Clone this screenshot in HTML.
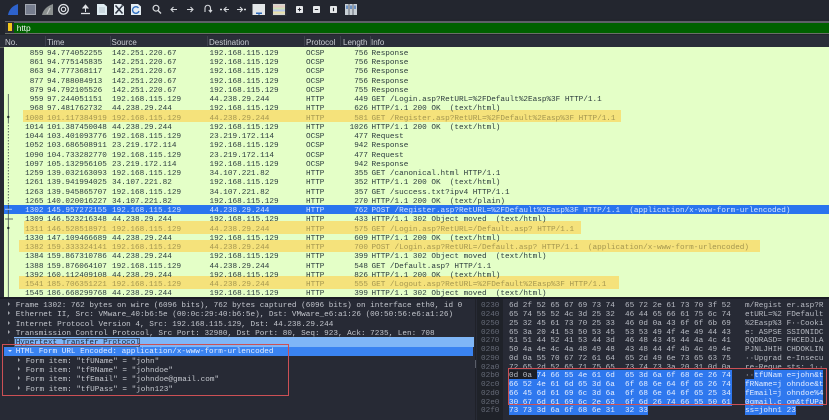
<!DOCTYPE html>
<html><head><meta charset="utf-8"><style>
html,body{margin:0;padding:0;background:#272a35;}
#w{position:relative;width:829px;height:420px;overflow:hidden;background:#272a35;filter:blur(.35px);font-family:"Liberation Mono",monospace;font-size:7.68px;}
.a{position:absolute;}
.r{position:absolute;left:0;width:829px;height:9.25px;line-height:9.25px;color:#2c3c3e;white-space:pre;}
.r i{position:absolute;font-style:normal;top:2.5px;}
.n{right:785.5px;}.t{left:47px;}.s{left:112px;}.d{left:209.5px;}.p{left:306px;}.l{right:461px;}.f{left:371.5px;}
.r.y{color:#a59750;}
.r.sel{color:#d5e4ff;}
.h{position:absolute;top:36px;height:12px;font:8px/14px "Liberation Sans",sans-serif;color:#c9ccd2;}
.sep{position:absolute;top:36px;width:1px;height:10px;background:#3d414c;}
.dt{position:absolute;height:9.25px;line-height:9.25px;white-space:pre;color:#c3c6cd;margin-top:2.5px;}
.ar{position:absolute;width:0;height:0;border-left:2.5px solid #a5a8b0;border-top:2px solid transparent;border-bottom:2px solid transparent;}
.hx{position:absolute;height:8.75px;line-height:8.75px;white-space:pre;color:#b9bcc4;margin-top:2.3px;}
.of{color:#666b78;}
.bl{position:absolute;background:#2f78ee;height:9px;}
.w{color:#e3edff;}
</style></head><body><div id="w">

<!-- toolbar -->
<div class="a" style="left:0;top:0;width:829px;height:19px;background:#23262f"></div>
<svg class="a" style="left:0;top:0" width="370" height="19" viewBox="0 0 370 19">
<path d="M8 15C8.800 10 12 6 18 4L18 15Z" fill="#2d62cc"/>
<rect x="25.500" y="4.500" width="10" height="10" fill="#767d8e" stroke="#a3a8b2"/>
<path d="M42 15C43 10 47 6 53 4L53 15Z" fill="#8b908f"/><path d="M47 14L50 8" stroke="#c4c7c7" stroke-width="1.200"/>
<circle cx="63.500" cy="9.300" r="4.800" fill="none" stroke="#dfe2e6" stroke-width="1.300"/><circle cx="63.500" cy="9.300" r="2.200" fill="none" stroke="#dfe2e6" stroke-width="1.200"/>
<path d="M85.500 12V6M83 8L85.500 5L88 8Z" stroke="#dfe2e6" fill="#dfe2e6"/><path d="M81 13.500H90" stroke="#dfe2e6" stroke-width="1.300"/>
<path d="M97 4H104L107 6.500V15H97Z" fill="#dfecf2"/><path d="M99 8H105M99 10H105M99 12H105" stroke="#a6b6c0" stroke-width=".700"/>
<path d="M114 4H121L124 6.500V15H114Z" fill="#e5edf2"/><path d="M115.500 5.500L122.500 13.500M122.500 5.500L115.500 13.500" stroke="#2c3340" stroke-width="1.500"/>
<path d="M131 4H138L141 6.500V15H131Z" fill="#e5edf2"/><path d="M138.500 8A3.300 3.300 0 1 0 139 11" fill="none" stroke="#3070c0" stroke-width="1.400"/>
<circle cx="156" cy="8.200" r="2.900" fill="none" stroke="#d7dade" stroke-width="1.200"/><path d="M158 10.500L161 13.500" stroke="#d7dade" stroke-width="1.400"/>
<path d="M177 9.500H171M173.500 7L171 9.500L173.500 12" fill="none" stroke="#d7dade" stroke-width="1.100"/>
<path d="M187 9.500H193M190.500 7L193 9.500L190.500 12" fill="none" stroke="#d7dade" stroke-width="1.100"/>
<path d="M205 12V8A2.700 2.700 0 0 1 210.500 8V11.500M208.800 10L210.500 12L212 10" fill="none" stroke="#d7dade" stroke-width="1.100"/>
<path d="M229 9.500H224.500M226.500 7L224 9.500L226.500 12" fill="none" stroke="#d7dade" stroke-width="1.100"/><path d="M220 9.500H222" stroke="#d7dade" stroke-width="1.500"/>
<path d="M237 9.500H242M240 7L242.500 9.500L240 12" fill="none" stroke="#d7dade" stroke-width="1.100"/><path d="M244 9.500H246" stroke="#d7dade" stroke-width="1.500"/>
<rect x="252.500" y="4" width="12.500" height="11" fill="#e3e6e8"/><path d="M256 12.500H262L259 15Z" fill="#2d68b8"/><rect x="256" y="12.500" width="6" height="1.500" fill="#2d68b8"/>
<rect x="271.500" y="3" width="15" height="13" fill="#2e313b"/><rect x="273" y="4" width="12" height="11" fill="#d8d8d0"/><rect x="273" y="5.500" width="12" height="2" fill="#e5c9c0"/><rect x="273" y="7.500" width="12" height="2" fill="#cfe0b8"/><rect x="273" y="9.500" width="12" height="2" fill="#b8c8e8"/><rect x="273" y="11.500" width="12" height="2" fill="#e8e0a8"/>
<rect x="296" y="6" width="7" height="7" rx=".8" fill="#e6e8ea"/><path d="M297.800 9.500H301.200M299.500 7.800V11.200" stroke="#22252e" stroke-width="1"/>
<rect x="313" y="6" width="7" height="7" rx=".8" fill="#e6e8ea"/><path d="M314.800 9.500H318.200" stroke="#22252e" stroke-width="1"/>
<rect x="330" y="6" width="7" height="7" rx=".8" fill="#e6e8ea"/><path d="M333.500 7.800V11.200" stroke="#22252e" stroke-width="1.100"/>
<rect x="345" y="4" width="12" height="11" fill="#c9d0d6"/><path d="M349 4V15M353 4V15" stroke="#4a4f5a" stroke-width=".8"/><path d="M347 5.500V9M351 5.500V9M355 5.500V9" stroke="#2d68b8" stroke-width="1.200"/>
</svg>

<!-- filter -->
<div class="a" style="left:0;top:19px;width:829px;height:16px;background:#22252d"></div>
<div class="a" style="left:5px;top:21px;width:824px;height:1.600px;background:#5e6068"></div>
<div class="a" style="left:5px;top:22.600px;width:824px;height:10px;background:#006100"></div>
<div class="a" style="left:5px;top:32.600px;width:824px;height:1.200px;background:#6a7068"></div>
<div class="a" style="left:5px;top:22px;width:9px;height:11px;background:#2a2c33"></div>
<div class="a" style="left:8px;top:23px;width:4px;height:8px;background:#f3c81c"></div>
<div class="a" style="left:16.700px;top:23.200px;font:8.400px/10px 'Liberation Sans',sans-serif;color:#f2f6f2">http</div>

<!-- header -->
<div class="a" style="left:0;top:35px;width:829px;height:12px;background:#2a2e38"></div>
<div class="h" style="left:5px">No.</div><div class="h" style="left:47px">Time</div><div class="h" style="left:111.500px">Source</div><div class="h" style="left:209px">Destination</div><div class="h" style="left:306px">Protocol</div><div class="h" style="left:343px">Length</div><div class="h" style="left:371px">Info</div>
<div class="sep" style="left:44.500px"></div><div class="sep" style="left:110px"></div><div class="sep" style="left:206.500px"></div><div class="sep" style="left:303.500px"></div><div class="sep" style="left:340px"></div><div class="sep" style="left:369.500px"></div>
<div class="a" style="left:0;top:46.600px;width:829px;height:.800px;background:#61665f"></div>

<!-- list -->
<div class="a" style="left:3.500px;top:47.400px;width:826px;height:249.400px;background:#e4ffc7"></div>
<div class="a" style="left:23px;top:109.500px;width:598px;height:12.700px;background:#f5e27b"></div>
<div class="a" style="left:24px;top:221px;width:557px;height:12.700px;background:#f5e27b"></div>
<div class="a" style="left:19px;top:239.500px;width:741px;height:12.700px;background:#f5e27b"></div>
<div class="a" style="left:19px;top:275.800px;width:600px;height:12.900px;background:#f5e27b"></div>
<div class="a" style="left:3.500px;top:205px;width:826px;height:9.200px;background:#2a74ee"></div>

<div class="r" style="top:47.400px"><i class="n">859</i><i class="t">94.774052255</i><i class="s">142.251.220.67</i><i class="d">192.168.115.129</i><i class="p">OCSP</i><i class="l">756</i><i class="f">Response</i></div>
<div class="r" style="top:56.650px"><i class="n">861</i><i class="t">94.775145835</i><i class="s">142.251.220.67</i><i class="d">192.168.115.129</i><i class="p">OCSP</i><i class="l">756</i><i class="f">Response</i></div>
<div class="r" style="top:65.900px"><i class="n">863</i><i class="t">94.777368117</i><i class="s">142.251.220.67</i><i class="d">192.168.115.129</i><i class="p">OCSP</i><i class="l">756</i><i class="f">Response</i></div>
<div class="r" style="top:75.150px"><i class="n">877</i><i class="t">94.788084913</i><i class="s">142.251.220.67</i><i class="d">192.168.115.129</i><i class="p">OCSP</i><i class="l">756</i><i class="f">Response</i></div>
<div class="r" style="top:84.400px"><i class="n">879</i><i class="t">94.792105526</i><i class="s">142.251.220.67</i><i class="d">192.168.115.129</i><i class="p">OCSP</i><i class="l">755</i><i class="f">Response</i></div>
<div class="r" style="top:93.650px"><i class="n">959</i><i class="t">97.244051151</i><i class="s">192.168.115.129</i><i class="d">44.238.29.244</i><i class="p">HTTP</i><i class="l">449</i><i class="f">GET /Login.asp?RetURL=%2FDefault%2Easp%3F HTTP/1.1</i></div>
<div class="r" style="top:102.900px"><i class="n">968</i><i class="t">97.481762732</i><i class="s">44.238.29.244</i><i class="d">192.168.115.129</i><i class="p">HTTP</i><i class="l">626</i><i class="f">HTTP/1.1 200 OK  (text/html)</i></div>
<div class="r y" style="top:112.150px"><i class="n">1008</i><i class="t">101.117384919</i><i class="s">192.168.115.129</i><i class="d">44.238.29.244</i><i class="p">HTTP</i><i class="l">581</i><i class="f">GET /Register.asp?RetURL=%2FDefault%2Easp%3F HTTP/1.1</i></div>
<div class="r" style="top:121.400px"><i class="n">1014</i><i class="t">101.387450048</i><i class="s">44.238.29.244</i><i class="d">192.168.115.129</i><i class="p">HTTP</i><i class="l">1026</i><i class="f">HTTP/1.1 200 OK  (text/html)</i></div>
<div class="r" style="top:130.650px"><i class="n">1044</i><i class="t">103.401093776</i><i class="s">192.168.115.129</i><i class="d">23.219.172.114</i><i class="p">OCSP</i><i class="l">477</i><i class="f">Request</i></div>
<div class="r" style="top:139.900px"><i class="n">1052</i><i class="t">103.686508911</i><i class="s">23.219.172.114</i><i class="d">192.168.115.129</i><i class="p">OCSP</i><i class="l">942</i><i class="f">Response</i></div>
<div class="r" style="top:149.150px"><i class="n">1090</i><i class="t">104.733282770</i><i class="s">192.168.115.129</i><i class="d">23.219.172.114</i><i class="p">OCSP</i><i class="l">477</i><i class="f">Request</i></div>
<div class="r" style="top:158.400px"><i class="n">1097</i><i class="t">105.132956105</i><i class="s">23.219.172.114</i><i class="d">192.168.115.129</i><i class="p">OCSP</i><i class="l">942</i><i class="f">Response</i></div>
<div class="r" style="top:167.650px"><i class="n">1259</i><i class="t">139.032163093</i><i class="s">192.168.115.129</i><i class="d">34.107.221.82</i><i class="p">HTTP</i><i class="l">355</i><i class="f">GET /canonical.html HTTP/1.1</i></div>
<div class="r" style="top:176.900px"><i class="n">1261</i><i class="t">139.941994025</i><i class="s">34.107.221.82</i><i class="d">192.168.115.129</i><i class="p">HTTP</i><i class="l">352</i><i class="f">HTTP/1.1 200 OK  (text/html)</i></div>
<div class="r" style="top:186.150px"><i class="n">1263</i><i class="t">139.945865707</i><i class="s">192.168.115.129</i><i class="d">34.107.221.82</i><i class="p">HTTP</i><i class="l">357</i><i class="f">GET /success.txt?ipv4 HTTP/1.1</i></div>
<div class="r" style="top:195.400px"><i class="n">1265</i><i class="t">140.020016227</i><i class="s">34.107.221.82</i><i class="d">192.168.115.129</i><i class="p">HTTP</i><i class="l">270</i><i class="f">HTTP/1.1 200 OK  (text/plain)</i></div>
<div class="r sel" style="top:204.650px"><i class="n">1302</i><i class="t">145.957272155</i><i class="s">192.168.115.129</i><i class="d">44.238.29.244</i><i class="p">HTTP</i><i class="l">762</i><i class="f">POST /Register.asp?RetURL=%2FDefault%2Easp%3F HTTP/1.1  (application/x-www-form-urlencoded)</i></div>
<div class="r" style="top:213.900px"><i class="n">1309</i><i class="t">146.523216348</i><i class="s">44.238.29.244</i><i class="d">192.168.115.129</i><i class="p">HTTP</i><i class="l">433</i><i class="f">HTTP/1.1 302 Object moved  (text/html)</i></div>
<div class="r y" style="top:223.150px"><i class="n">1311</i><i class="t">146.528518971</i><i class="s">192.168.115.129</i><i class="d">44.238.29.244</i><i class="p">HTTP</i><i class="l">575</i><i class="f">GET /Login.asp?RetURL=/Default.asp? HTTP/1.1</i></div>
<div class="r" style="top:232.400px"><i class="n">1330</i><i class="t">147.109466689</i><i class="s">44.238.29.244</i><i class="d">192.168.115.129</i><i class="p">HTTP</i><i class="l">609</i><i class="f">HTTP/1.1 200 OK  (text/html)</i></div>
<div class="r y" style="top:241.650px"><i class="n">1382</i><i class="t">159.333324141</i><i class="s">192.168.115.129</i><i class="d">44.238.29.244</i><i class="p">HTTP</i><i class="l">700</i><i class="f">POST /Login.asp?RetURL=/Default.asp? HTTP/1.1  (application/x-www-form-urlencoded)</i></div>
<div class="r" style="top:250.900px"><i class="n">1384</i><i class="t">159.867310786</i><i class="s">44.238.29.244</i><i class="d">192.168.115.129</i><i class="p">HTTP</i><i class="l">399</i><i class="f">HTTP/1.1 302 Object moved  (text/html)</i></div>
<div class="r" style="top:260.150px"><i class="n">1388</i><i class="t">159.876064107</i><i class="s">192.168.115.129</i><i class="d">44.238.29.244</i><i class="p">HTTP</i><i class="l">548</i><i class="f">GET /Default.asp? HTTP/1.1</i></div>
<div class="r" style="top:269.400px"><i class="n">1392</i><i class="t">160.112409108</i><i class="s">44.238.29.244</i><i class="d">192.168.115.129</i><i class="p">HTTP</i><i class="l">826</i><i class="f">HTTP/1.1 200 OK  (text/html)</i></div>
<div class="r y" style="top:278.650px"><i class="n">1541</i><i class="t">185.706351221</i><i class="s">192.168.115.129</i><i class="d">44.238.29.244</i><i class="p">HTTP</i><i class="l">555</i><i class="f">GET /Logout.asp?RetURL=%2FDefault%2Easp%3F HTTP/1.1</i></div>
<div class="r" style="top:287.900px;height:8.900px;overflow:hidden"><i class="n">1545</i><i class="t">186.668299768</i><i class="s">44.238.29.244</i><i class="d">192.168.115.129</i><i class="p">HTTP</i><i class="l">399</i><i class="f">HTTP/1.1 302 Object moved  (text/html)</i></div>

<!-- related packet gutter -->
<svg class="a" style="left:0;top:90px" width="20" height="210" viewBox="0 0 20 210">
<path d="M8.300 4V32" stroke="#3c4a4c" stroke-width=".8"/>
<path d="M8.300 32V115" stroke="#3c4a4c" stroke-width=".8" stroke-dasharray="1.500 1.500"/>
<path d="M8.300 115V207" stroke="#3c4a4c" stroke-width=".8"/>
<circle cx="8.300" cy="27" r="1.200" fill="#1e2a2c"/>
<path d="M5 119.300H12" stroke="#aac4f0" stroke-width="1"/>
<path d="M5 129H13" stroke="#3c4a4c" stroke-width=".8"/>
<circle cx="8.300" cy="138" r="1.200" fill="#1e2a2c"/>
</svg>

<!-- separator -->
<div class="a" style="left:0;top:296.800px;width:829px;height:2.500px;background:#1b1d25"></div>

<!-- details -->
<div class="a" style="left:13.500px;top:337.300px;width:460px;height:9.400px;background:#7fb6f7"></div>
<div class="a" style="left:14px;top:337.500px;width:126px;height:9px;border:.6px solid #4a5a74;box-sizing:border-box"></div>
<div class="a" style="left:4px;top:346.700px;width:469px;height:9.200px;background:#3a83f1"></div>
<div class="ar" style="left:8px;top:302px"></div>
<div class="ar" style="left:8px;top:311.300px"></div>
<div class="ar" style="left:8px;top:320.600px"></div>
<div class="ar" style="left:8px;top:329.900px"></div>
<div class="ar" style="left:8px;top:339.200px;border-left-color:#30384a"></div>
<div class="a" style="left:7.500px;top:349.800px;width:0;height:0;border-top:2.500px solid #dce8ff;border-left:2px solid transparent;border-right:2px solid transparent"></div>
<div class="ar" style="left:18px;top:357.700px"></div>
<div class="ar" style="left:18px;top:367px"></div>
<div class="ar" style="left:18px;top:376.300px"></div>
<div class="ar" style="left:18px;top:385.600px"></div>
<div class="dt" style="left:15.700px;top:299.400px">Frame 1302: 762 bytes on wire (6096 bits), 762 bytes captured (6096 bits) on interface eth0, id 0</div>
<div class="dt" style="left:15.700px;top:308.700px">Ethernet II, Src: VMware_40:b6:5e (00:0c:29:40:b6:5e), Dst: VMware_e6:a1:26 (00:50:56:e6:a1:26)</div>
<div class="dt" style="left:15.700px;top:318px">Internet Protocol Version 4, Src: 192.168.115.129, Dst: 44.238.29.244</div>
<div class="dt" style="left:15.700px;top:327.300px">Transmission Control Protocol, Src Port: 32980, Dst Port: 80, Seq: 923, Ack: 7235, Len: 708</div>
<div class="dt" style="left:15.700px;top:336.600px;color:#222c3c">Hypertext Transfer Protocol</div>
<div class="dt" style="left:15.700px;top:345.900px;color:#e4eeff">HTML Form URL Encoded: application/x-www-form-urlencoded</div>
<div class="dt" style="left:25.700px;top:355.200px">Form item: "tfUName" = "john"</div>
<div class="dt" style="left:25.700px;top:364.500px">Form item: "tfRName" = "johndoe"</div>
<div class="dt" style="left:25.700px;top:373.800px">Form item: "tfEmail" = "johndoe@gmail.com"</div>
<div class="dt" style="left:25.700px;top:383.100px">Form item: "tfUPass" = "john123"</div>
<div class="a" style="left:2.200px;top:344.300px;width:286.500px;height:51.400px;border:1.300px solid #cc5055;box-sizing:border-box"></div>
<div class="a" style="left:475px;top:299px;width:1.200px;height:121px;background:#1f2129"></div>
<div class="a" style="left:474.500px;top:360px;width:1.500px;height:8px;background:#5a5e68"></div>

<!-- bytes -->
<div class="a" style="left:477px;top:299px;width:26px;height:121px;background:#1f2229"></div>
<div class="bl" style="left:537px;top:370px;width:195px"></div>
<div class="bl" style="left:509px;top:379px;width:223px;height:26.500px"></div>
<div class="bl" style="left:509px;top:405.500px;width:139px"></div>
<div class="bl" style="left:754px;top:370px;width:69px"></div>
<div class="bl" style="left:745px;top:379px;width:78px;height:26.500px"></div>
<div class="bl" style="left:745px;top:405.500px;width:51px"></div>
<div class="a" style="left:509px;top:370px;width:28px;height:9px;background:#1c1e26"></div>

<div class="hx of" style="left:481px;top:300px">0230</div><div class="hx" style="left:509px;top:300px">6d 2f 52 65 67 69 73 74</div><div class="hx" style="left:625px;top:300px">65 72 2e 61 73 70 3f 52</div><div class="hx" style="left:745px;top:300px">m/Regist</div><div class="hx" style="left:786.600px;top:300px">er.asp?R</div>
<div class="hx of" style="left:481px;top:308.750px">0240</div><div class="hx" style="left:509px;top:308.750px">65 74 55 52 4c 3d 25 32</div><div class="hx" style="left:625px;top:308.750px">46 44 65 66 61 75 6c 74</div><div class="hx" style="left:745px;top:308.750px">etURL=%2</div><div class="hx" style="left:786.600px;top:308.750px">FDefault</div>
<div class="hx of" style="left:481px;top:317.500px">0250</div><div class="hx" style="left:509px;top:317.500px">25 32 45 61 73 70 25 33</div><div class="hx" style="left:625px;top:317.500px">46 0d 0a 43 6f 6f 6b 69</div><div class="hx" style="left:745px;top:317.500px">%2Easp%3</div><div class="hx" style="left:786.600px;top:317.500px">F··Cooki</div>
<div class="hx of" style="left:481px;top:326.250px">0260</div><div class="hx" style="left:509px;top:326.250px">65 3a 20 41 53 50 53 45</div><div class="hx" style="left:625px;top:326.250px">53 53 49 4f 4e 49 44 43</div><div class="hx" style="left:745px;top:326.250px">e: ASPSE</div><div class="hx" style="left:786.600px;top:326.250px">SSIONIDC</div>
<div class="hx of" style="left:481px;top:335px">0270</div><div class="hx" style="left:509px;top:335px">51 51 44 52 41 53 44 3d</div><div class="hx" style="left:625px;top:335px">46 48 43 45 44 4a 4c 41</div><div class="hx" style="left:745px;top:335px">QQDRASD=</div><div class="hx" style="left:786.600px;top:335px">FHCEDJLA</div>
<div class="hx of" style="left:481px;top:343.750px">0280</div><div class="hx" style="left:509px;top:343.750px">50 4a 4e 4c 4a 48 49 48</div><div class="hx" style="left:625px;top:343.750px">43 48 44 4f 4b 4c 49 4e</div><div class="hx" style="left:745px;top:343.750px">PJNLJHIH</div><div class="hx" style="left:786.600px;top:343.750px">CHDOKLIN</div>
<div class="hx of" style="left:481px;top:352.500px">0290</div><div class="hx" style="left:509px;top:352.500px">0d 0a 55 70 67 72 61 64</div><div class="hx" style="left:625px;top:352.500px">65 2d 49 6e 73 65 63 75</div><div class="hx" style="left:745px;top:352.500px">··Upgrad</div><div class="hx" style="left:786.600px;top:352.500px">e-Insecu</div>
<div class="hx of" style="left:481px;top:361.250px">02a0</div><div class="hx" style="left:509px;top:361.250px">72 65 2d 52 65 71 75 65</div><div class="hx" style="left:625px;top:361.250px">73 74 73 3a 20 31 0d 0a</div><div class="hx" style="left:745px;top:361.250px">re-Reque</div><div class="hx" style="left:786.600px;top:361.250px">sts: 1··</div>
<div class="hx of" style="left:481px;top:370px">02b0</div><div class="hx" style="left:509px;top:370px">0d 0a <span class="w">74 66 55 4e 61 6d</span></div><div class="hx w" style="left:625px;top:370px">65 3d 6a 6f 68 6e 26 74</div><div class="hx" style="left:745px;top:370px">··<span class="w">tfUNam</span></div><div class="hx w" style="left:786.600px;top:370px">e=john&amp;t</div>
<div class="hx of" style="left:481px;top:378.750px">02c0</div><div class="hx w" style="left:509px;top:378.750px">66 52 4e 61 6d 65 3d 6a</div><div class="hx w" style="left:625px;top:378.750px">6f 68 6e 64 6f 65 26 74</div><div class="hx w" style="left:745px;top:378.750px">fRName=j</div><div class="hx w" style="left:786.600px;top:378.750px">ohndoe&amp;t</div>
<div class="hx of" style="left:481px;top:387.500px">02d0</div><div class="hx w" style="left:509px;top:387.500px">66 45 6d 61 69 6c 3d 6a</div><div class="hx w" style="left:625px;top:387.500px">6f 68 6e 64 6f 65 25 34</div><div class="hx w" style="left:745px;top:387.500px">fEmail=j</div><div class="hx w" style="left:786.600px;top:387.500px">ohndoe%4</div>
<div class="hx of" style="left:481px;top:396.250px">02e0</div><div class="hx w" style="left:509px;top:396.250px">30 67 6d 61 69 6c 2e 63</div><div class="hx w" style="left:625px;top:396.250px">6f 6d 26 74 66 55 50 61</div><div class="hx w" style="left:745px;top:396.250px">0gmail.c</div><div class="hx w" style="left:786.600px;top:396.250px">om&amp;tfUPa</div>
<div class="hx of" style="left:481px;top:405px">02f0</div><div class="hx w" style="left:509px;top:405px">73 73 3d 6a 6f 68 6e 31</div><div class="hx w" style="left:625px;top:405px">32 33</div><div class="hx w" style="left:745px;top:405px">ss=john1</div><div class="hx w" style="left:786.600px;top:405px">23</div>
<div class="a" style="left:508px;top:367.700px;width:319px;height:37.500px;border:1.300px solid #cc5055;box-sizing:border-box"></div>

</div></body></html>
